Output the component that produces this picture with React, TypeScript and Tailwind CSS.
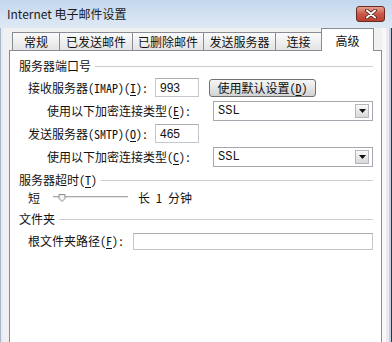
import type { ReactNode } from 'react';

const cjk = "font-['Noto_Sans_Mono_CJK_SC','Noto_Sans_CJK_SC',sans-serif]";

function Mn({ children }: { children: ReactNode }) {
  return <span className="underline underline-offset-2 decoration-1">{children}</span>;
}

function GroupLabel({ children, className = '' }: { children: ReactNode; className?: string }) {
  return (
    <div className={`flex h-[16px] items-center ${className}`}>
      <span className="whitespace-nowrap">{children}</span>
      <div className="ml-[4px] h-px flex-1 bg-[#c9ced4]" />
    </div>
  );
}

function TextBox({ value = '', className = '' }: { value?: string; className?: string }) {
  return (
    <div
      className={`flex items-center border border-[#c3c6cc] border-t-[#abadb3] bg-white pl-[4px] font-['Liberation_Sans',sans-serif] text-[12px] ${className}`}
    >
      {value}
    </div>
  );
}

function Select({ value }: { value: string }) {
  return (
    <div className="flex h-[20px] flex-1 items-center justify-between border border-[#a5a8ae] bg-white pl-[4px] pr-[3px]">
      <span className="font-['Liberation_Mono',monospace] text-[12px]">{value}</span>
      <div className="flex h-[14px] w-[14px] items-center justify-center border border-[#b4b6ba] bg-gradient-to-b from-[#fafafa] to-[#d8d8d8]">
        <svg width="7" height="4" viewBox="0 0 7 4">
          <path d="M0 0h7L3.5 4z" fill="#111" />
        </svg>
      </div>
    </div>
  );
}

const tabs = [
  { label: '常规', w: 'w-[48px]' },
  { label: '已发送邮件', w: 'w-[74px]' },
  { label: '已删除邮件', w: 'w-[72px]' },
  { label: '发送服务器', w: 'w-[73px]' },
  { label: '连接', w: 'w-[47px]' },
];

export default function App() {
  return (
    <div className={`flex h-[342px] w-[392px] flex-col overflow-hidden bg-[#f0f0f0] text-[12px] leading-[14px] text-[#111] ${cjk}`}>
      {/* title bar */}
      <div className="flex h-[28px] shrink-0 items-center justify-between bg-gradient-to-b from-[#c3d7ed] to-[#dfe9f5] pl-[7px] pr-[7px]">
        <span className="font-['Noto_Sans_CJK_SC',sans-serif] text-[12px] text-[#1b1b1b]">Internet 电子邮件设置</span>
        <div className="flex h-[16px] w-[29px] items-center justify-center rounded-[3px] border border-[#6b2a20] bg-gradient-to-b from-[#e6a08f] via-[#c9574a] to-[#b8402f]">
          <svg width="12" height="10" viewBox="0 0 12 10">
            <path d="M2 1.5l8 7M10 1.5l-8 7" stroke="#4a1810" strokeWidth="3.6" strokeLinecap="round" />
            <path d="M2 1.5l8 7M10 1.5l-8 7" stroke="#fff" strokeWidth="2" strokeLinecap="round" />
          </svg>
        </div>
      </div>

      <div className="flex min-h-0 flex-1">
        <div className="w-[3px] border-l border-[#a9b8c8] bg-[#e4ebf3]" />
        <div className="flex flex-1 flex-col pl-[6px]">
          {/* tabs */}
          <div className="flex h-[22px] shrink-0 items-end pl-[3px]">
            {tabs.map((t, i) => (
              <div
                key={t.label}
                className={`flex h-[18px] items-center justify-center border border-b-0 border-[#898c95] bg-gradient-to-b from-[#fbfbfb] to-[#e4e4e4] ${t.w} ${i > 0 ? '-ml-px' : ''}`}
              >
                {t.label}
              </div>
            ))}
            <div className="relative z-10 -mb-px -ml-px flex h-[23px] w-[53px] items-start justify-center border border-b-0 border-[#898c95] bg-white pt-[5px]">
              高级
            </div>
          </div>

          {/* panel */}
          <div className="h-[300px] shrink-0 border border-[#898c95] bg-white pl-[9px] pr-[8px]">
            <GroupLabel className="mt-[7px]">服务器端口号</GroupLabel>

            <div className="mt-[2px] pl-[9px]">
              <div className="flex h-[23px] items-center">
                <span className="w-[127px] whitespace-nowrap">
                  接收服务器(IMAP)(<Mn>I</Mn>):
                </span>
                <TextBox value="993" className="h-[19px] w-[44px]" />
                <button className="ml-[10px] flex h-[18px] w-[107px] items-center justify-center rounded-[3px] border border-[#707070] bg-gradient-to-b from-[#f6f6f6] via-[#e6e6e6] to-[#d2d2d2] text-[12px] leading-[14px]">
                  使用默认设置(<Mn>D</Mn>)
                </button>
              </div>
              <div className="flex h-[23px] items-center pl-[19px]">
                <span className="w-[166px] whitespace-nowrap">
                  使用以下加密连接类型(<Mn>E</Mn>):
                </span>
                <Select value="SSL" />
              </div>
              <div className="flex h-[23px] items-center">
                <span className="w-[127px] whitespace-nowrap">
                  发送服务器(SMTP)(<Mn>O</Mn>):
                </span>
                <TextBox value="465" className="h-[19px] w-[44px]" />
              </div>
              <div className="flex h-[23px] items-center pl-[19px]">
                <span className="w-[166px] whitespace-nowrap">
                  使用以下加密连接类型(<Mn>C</Mn>):
                </span>
                <Select value="SSL" />
              </div>
            </div>

            <GroupLabel className="mt-[4px]">
              服务器超时(<Mn>T</Mn>)
            </GroupLabel>

            <div className="flex h-[20px] items-center pl-[9px]">
              <span>短</span>
              <svg className="ml-[13px]" width="75" height="12" viewBox="0 0 75 12">
                <rect x="0" y="4" width="75" height="1" fill="#a7a7a7" />
                <rect x="0" y="5" width="75" height="1" fill="#e6e6e6" />
                <path d="M6 2.5h6v4l-3 3-3-3z" fill="#f4f4f4" stroke="#8a8a8a" strokeWidth="1" />
              </svg>
              <div className="ml-[10px] flex gap-[6px]">
                <span>长</span>
                <span>1</span>
                <span>分钟</span>
              </div>
            </div>

            <GroupLabel className="mt-[3px]">文件夹</GroupLabel>

            <div className="mt-[4px] flex h-[20px] items-center pl-[9px]">
              <span className="w-[105px] whitespace-nowrap">
                根文件夹路径(<Mn>F</Mn>):
              </span>
              <TextBox className="h-[17px] flex-1" />
            </div>
          </div>
        </div>
        <div className="w-[10px] border-r border-[#1f3a44] bg-[linear-gradient(to_right,#f8f8f8_0,#f8f8f8_4px,#efe6ef_4px,#efe6ef_7px,#b9d3e3_7px)]" />
      </div>
    </div>
  );
}
